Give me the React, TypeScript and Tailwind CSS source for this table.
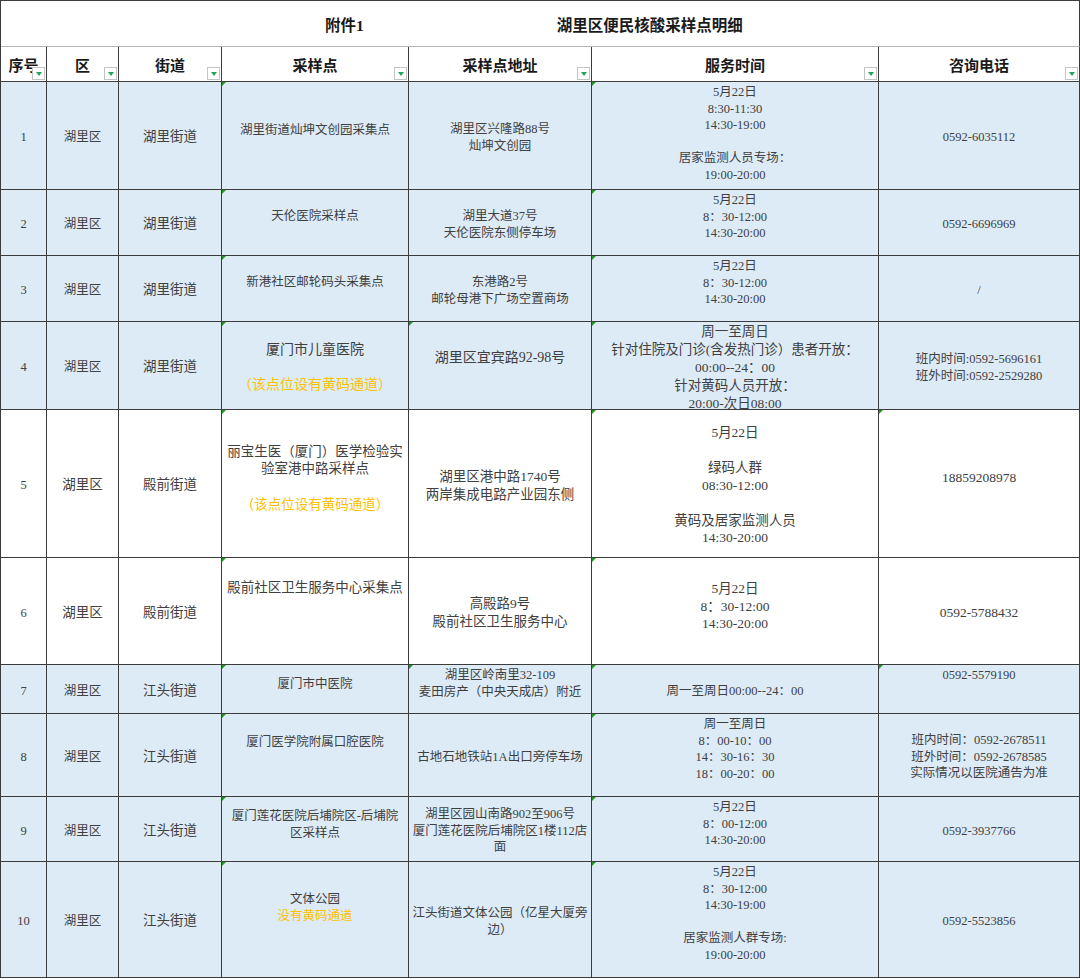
type Line = string | { y: string };
type C = { l: Line[]; c?: string };
type Row = {
  n: string;
  jd: string;
  white?: boolean;
  qc?: string;
  site: C;
  addr: C;
  time: C;
  tel: C;
  g?: number[];
};

const rows: Row[] = [
  {
    n: "1",
    jd: "湖里街道",
    site: { l: ["湖里街道灿坤文创园采集点"], c: "pb-[14px]" },
    addr: { l: ["湖里区兴隆路88号", "灿坤文创园"] },
    time: {
      l: ["5月22日", "8:30-11:30", "14:30-19:00", "", "居家监测人员专场：", "19:00-20:00"],
      c: "justify-start pt-[2px]",
    },
    tel: { l: ["0592-6035112"] },
  },
  {
    n: "2",
    jd: "湖里街道",
    site: { l: ["天伦医院采样点"], c: "pb-[16px]" },
    addr: { l: ["湖里大道37号", "天伦医院东侧停车场"] },
    time: { l: ["5月22日", "8：30-12:00", "14:30-20:00"], c: "justify-start pt-[2px]" },
    tel: { l: ["0592-6696969"] },
  },
  {
    n: "3",
    jd: "湖里街道",
    site: { l: ["新港社区邮轮码头采集点"], c: "pb-[16px]" },
    addr: { l: ["东港路2号", "邮轮母港下广场空置商场"] },
    time: { l: ["5月22日", "8：30-12:00", "14:30-20:00"], c: "justify-start pt-[2px]" },
    tel: { l: ["/"] },
  },
  {
    n: "4",
    jd: "湖里街道",
    g: [3, 4, 5],
    site: {
      l: ["厦门市儿童医院", "", { y: "（该点位设有黄码通道）" }],
      c: "text-[14px] leading-[17.5px]",
    },
    addr: { l: ["湖里区宜宾路92-98号"], c: "text-[14px] pb-[18px]" },
    time: {
      l: ["周一至周日", "针对住院及门诊(含发热门诊）患者开放：", "00:00--24：00", "针对黄码人员开放：", "20:00-次日08:00"],
      c: "text-[13.5px] leading-[18px]",
    },
    tel: { l: ["班内时间:0592-5696161", "班外时间:0592-2529280"] },
  },
  {
    n: "5",
    jd: "殿前街道",
    white: true,
    qc: "text-[13.5px]",
    g: [3, 5, 6],
    site: {
      l: ["丽宝生医（厦门）医学检验实", "验室港中路采样点", "", { y: "（该点位设有黄码通道）" }],
      c: "text-[13.5px] leading-[17.6px] pb-[15px]",
    },
    addr: { l: ["湖里区港中路1740号", "两岸集成电路产业园东侧"], c: "text-[13.5px] leading-[17.6px]" },
    time: {
      l: ["5月22日", "", "绿码人群", "08:30-12:00", "", "黄码及居家监测人员", "14:30-20:00"],
      c: "text-[13.5px] leading-[17.6px]",
    },
    tel: { l: ["18859208978"], c: "text-[13.5px] pb-[14px]" },
  },
  {
    n: "6",
    jd: "殿前街道",
    white: true,
    qc: "text-[13.5px]",
    site: { l: ["殿前社区卫生服务中心采集点"], c: "text-[13.5px] leading-[17.6px] justify-start pt-[21px]" },
    addr: { l: ["高殿路9号", "殿前社区卫生服务中心"], c: "text-[13.5px] leading-[17.6px]" },
    time: { l: ["5月22日", "8：30-12:00", "14:30-20:00"], c: "text-[13.5px] leading-[17.6px] pb-[13px]" },
    tel: { l: ["0592-5788432"], c: "text-[13.5px]" },
  },
  {
    n: "7",
    jd: "江头街道",
    g: [3, 4, 5, 6],
    site: { l: ["厦门市中医院"], c: "pb-[13px]" },
    addr: { l: ["湖里区岭南里32-109", "麦田房产（中央天成店）附近"], c: "justify-start pt-[2px]" },
    time: { l: ["周一至周日00:00--24：00"] },
    tel: { l: ["0592-5579190"], c: "justify-start pt-[2px]" },
  },
  {
    n: "8",
    jd: "江头街道",
    site: { l: ["厦门医学院附属口腔医院"], c: "justify-start pt-[20px]" },
    addr: { l: ["古地石地铁站1A出口旁停车场"] },
    time: { l: ["周一至周日", "8：00-10：00", "14：30-16：30", "18：00-20：00"], c: "justify-start pt-[2px]" },
    tel: { l: ["班内时间：0592-2678511", "班外时间：0592-2678585", "实际情况以医院通告为准"] },
  },
  {
    n: "9",
    jd: "江头街道",
    site: { l: ["厦门莲花医院后埔院区-后埔院", "区采样点"], c: "pb-[13px]" },
    addr: { l: ["湖里区园山南路902至906号", "厦门莲花医院后埔院区1楼112店", "面"] },
    time: { l: ["5月22日", "8：00-12:00", "14:30-20:00"], c: "justify-start pt-[2px]" },
    tel: { l: ["0592-3937766"] },
  },
  {
    n: "10",
    jd: "江头街道",
    site: { l: ["文体公园", { y: "没有黄码通道" }], c: "pb-[28px]" },
    addr: { l: ["江头街道文体公园（亿星大厦旁", "边）"] },
    time: {
      l: ["5月22日", "8：30-12:00", "14:30-19:00", "", "居家监测人群专场:", "19:00-20:00"],
      c: "justify-start pt-[2px]",
    },
    tel: { l: ["0592-5523856"] },
  },
];

const headers = ["序号", "区", "街道", "采样点", "采样点地址", "服务时间", "咨询电话"];

function Lines({ l }: { l: Line[] }) {
  return (
    <>
      {l.map((x, i) =>
        typeof x === "string" ? (
          <div key={i} className="whitespace-nowrap">
            {x === "" ? "\u00a0" : x}
          </div>
        ) : (
          <div key={i} className="whitespace-nowrap text-[#ffc000]">
            {x.y}
          </div>
        )
      )}
    </>
  );
}

function Cell({
  bg,
  corner,
  className = "",
  children,
}: {
  bg: string;
  corner?: boolean;
  className?: string;
  children: React.ReactNode;
}) {
  // cells without their own top padding get nudged down a little
  const pad = className.includes("pt-") ? "" : "pt-[4px]";
  return (
    <div
      className={`relative flex flex-col items-center justify-center text-center border-r border-b border-[#3c3c3c] text-[#404040] text-[12.5px] leading-[16.5px] ${bg} ${pad} ${className}`}
    >
      {corner && (
        <span className="absolute left-0 top-0 w-0 h-0 border-t-[4px] border-r-[4px] border-t-[#1f9a1f] border-r-transparent" />
      )}
      {children}
    </div>
  );
}

export default function App() {
  return (
    <div className="w-[1080px] h-[979px] bg-white font-['Liberation_Serif','Noto_Sans_CJK_SC',serif]">
      <div className="grid w-[1080px] grid-cols-[46px_72px_103px_187px_183px_287px_201px] grid-rows-[46px_35px_108px_66px_66px_88px_148px_107px_49px_83px_65px_116px] border-l border-t border-[#3c3c3c]">
        <div className="col-span-7 flex items-center gap-[193px] pl-[324px] pt-[4px] border-r border-b border-r-[#3c3c3c] border-b-[#b5b5b5] text-[15.5px] font-bold text-[#1a1a1a]">
          <span>附件1</span>
          <span>湖里区便民核酸采样点明细</span>
        </div>

        {headers.map((h) => (
          <div
            key={h}
            className="relative flex items-center justify-center border-r border-b border-[#3c3c3c] text-[15px] font-bold text-[#1a1a1a] whitespace-nowrap"
          >
            <span className="pt-[5px]">{h}</span>
            <span className="absolute right-[1px] bottom-[1px] w-[13px] h-[13px] border border-[#c4c4c4] bg-white flex items-center justify-center">
              <span className="w-0 h-0 border-l-[3.5px] border-r-[3.5px] border-t-[4px] border-l-transparent border-r-transparent border-t-[#22a35c]" />
            </span>
          </div>
        ))}

        {rows.map((r) => {
          const bg = r.white ? "bg-white" : "bg-[#ddebf7]";
          const g = r.g ?? [3, 5];
          return [
            <Cell key={r.n + "a"} bg={bg}>
              <div>{r.n}</div>
            </Cell>,
            <Cell key={r.n + "b"} bg={bg} className={r.qc ?? ""}>
              <div>湖里区</div>
            </Cell>,
            <Cell key={r.n + "c"} bg={bg} className="text-[13.5px]">
              <div>{r.jd}</div>
            </Cell>,
            <Cell key={r.n + "d"} bg={bg} corner={g.includes(3)} className={r.site.c}>
              <Lines l={r.site.l} />
            </Cell>,
            <Cell key={r.n + "e"} bg={bg} corner={g.includes(4)} className={r.addr.c}>
              <Lines l={r.addr.l} />
            </Cell>,
            <Cell key={r.n + "f"} bg={bg} corner={g.includes(5)} className={r.time.c}>
              <Lines l={r.time.l} />
            </Cell>,
            <Cell key={r.n + "g"} bg={bg} corner={g.includes(6)} className={r.tel.c}>
              <Lines l={r.tel.l} />
            </Cell>,
          ];
        })}
      </div>
    </div>
  );
}
